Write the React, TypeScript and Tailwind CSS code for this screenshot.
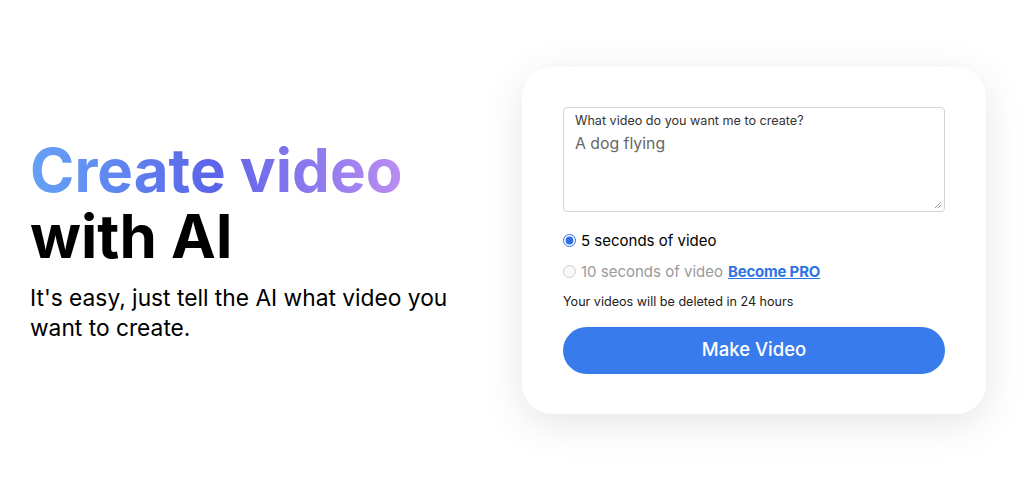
import React from 'react';

export default function App() {
  return (
    <div
      className="w-[1024px] h-[480px] bg-white flex items-center justify-between pl-[30px] pr-[38px]"
      style={{ fontFamily: 'Inter, "Noto Sans", sans-serif' }}
    >
      <div className="flex flex-col">
        <h1 className="text-[60px] font-bold leading-[66px]">
          <span className="bg-gradient-to-r from-[#64a2f6] via-[#5b63e8] to-[#bb8cf2] bg-clip-text text-transparent">
            Create video
          </span>
          <br />
          <span className="text-black">with AI</span>
        </h1>
        <p className="mt-[14px] text-[22.75px] leading-[30px] text-black w-[450px]">
          It's easy, just tell the AI what video you want to create.
        </p>
      </div>

      <div className="w-[464px] rounded-[30px] bg-white shadow-[0_10px_40px_rgba(0,0,0,0.10)] px-[41px] pt-[40px] pb-[40px]">
        <div className="relative h-[105px] rounded-[4px] border border-[#d4d4d4] px-[11px] pt-[4px]">
          <div className="text-[12.6px] leading-[18px] text-[#333]">What video do you want me to create?</div>
          <div className="mt-[3px] text-[15.8px] leading-[22px] text-[#666]">A dog flying</div>
          <svg className="absolute right-[2px] bottom-[2px]" width="8" height="8" viewBox="0 0 8 8">
            <path d="M7 1 L1 7 M7 4 L4 7" stroke="#999" strokeWidth="1" />
          </svg>
        </div>

        <label className="mt-[19px] flex items-center gap-[5px] text-[15px] leading-[20px] text-black">
          <input type="radio" name="len" defaultChecked className="w-[13px] h-[13px] accent-[#2f6fe0] m-0" />
          5 seconds of video
        </label>
        <label className="mt-[11px] flex items-center gap-[5px] text-[15px] leading-[20px] text-[#9a9a9a]">
          <input type="radio" name="len" disabled className="w-[13px] h-[13px] m-0" />
          10 seconds of video
          <a href="#" className="font-bold text-[#2f74e3] underline tracking-[-0.2px]">Become PRO</a>
        </label>
        <p className="mt-[11px] text-[12.6px] leading-[18px] text-[#222]">Your videos will be deleted in 24 hours</p>

        <button className="mt-[16px] w-full h-[47px] rounded-full bg-[#377bec] text-white text-[18.5px] font-medium">
          Make Video
        </button>
      </div>
    </div>
  );
}
